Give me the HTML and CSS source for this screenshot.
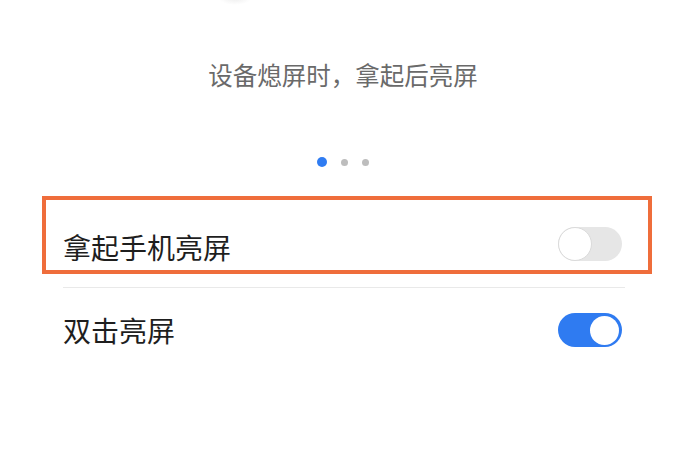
FILE: index.html
```html
<!DOCTYPE html>
<html lang="zh-CN">
<head>
<meta charset="utf-8">
<link rel="stylesheet" href="styles.css">
</head>
<body>
<div class="page">
  <div class="preview-edge"></div>
  <p class="hint">设备熄屏时，拿起后亮屏</p>
  <div class="dots">
    <span class="dot active"></span>
    <span class="dot"></span>
    <span class="dot"></span>
  </div>
  <div class="list">
    <div class="row highlighted">
      <span class="label">拿起手机亮屏</span>
      <span class="switch off"><span class="knob"></span></span>
      <span class="annot"></span>
    </div>
    <div class="row">
      <span class="label">双击亮屏</span>
      <span class="switch on"><span class="knob"></span></span>
    </div>
  </div>
</div>
</body>
</html>
```

FILE: styles.css
```css
html, body {
  margin: 0;
  padding: 0;
  background: #ffffff;
}
body {
  font-family: "Noto Sans CJK SC", "Noto Sans", sans-serif;
  width: 698px;
  height: 460px;
  overflow: hidden;
}
.page {
  position: relative;
  display: flow-root;
  width: 698px;
  height: 460px;
}
.preview-edge {
  position: absolute;
  left: 218px;
  top: -10px;
  width: 34px;
  height: 15px;
  border-radius: 50%;
  background: radial-gradient(ellipse at center, #ececec 0%, rgba(240,240,240,0) 70%);
}
.hint {
  margin: 58px 12px 0 0;
  text-align: center;
  font-size: 24.5px;
  line-height: 34px;
  color: #6a6a6a;
}
.dots {
  margin: 65px 12px 0 0;
  height: 10px;
  display: flex;
  justify-content: center;
  align-items: center;
  gap: 14px;
}
.dot {
  width: 7px;
  height: 7px;
  border-radius: 50%;
  background: #bdbdbd;
}
.dot.active {
  width: 10px;
  height: 10px;
  background: #2f7cf2;
}
.list {
  margin: 36px 73px 0 63px;
}
.row {
  position: relative;
  height: 84px;
  display: flex;
  align-items: center;
  justify-content: space-between;
}
.row + .row {
  border-top: 1px solid #e9e9e9;
}
.label {
  font-size: 28px;
  color: #1e1e1e;
  line-height: 40px;
  padding-top: 3px;
}
.row + .row .label {
  padding-top: 0;
}
.switch {
  position: relative;
  width: 64px;
  height: 34px;
  border-radius: 17px;
  margin-right: 3px;
  box-sizing: border-box;
}
.switch.off {
  background: #e6e6e6;
  margin-top: -3px;
}
.switch.off .knob {
  position: absolute;
  left: 0;
  top: 0;
  width: 34px;
  height: 34px;
  box-sizing: border-box;
  border-radius: 50%;
  background: #ffffff;
  border: 1.5px solid #dadada;
}
.switch.on {
  background: #2f7bf1;
}
.switch.on .knob {
  position: absolute;
  right: 3px;
  top: 2.5px;
  width: 29px;
  height: 29px;
  border-radius: 50%;
  background: #ffffff;
}
.annot {
  position: absolute;
  left: -21px;
  right: -27px;
  top: -7px;
  bottom: 13px;
  border: 4px solid #ef6d3b;
  pointer-events: none;
}
```
